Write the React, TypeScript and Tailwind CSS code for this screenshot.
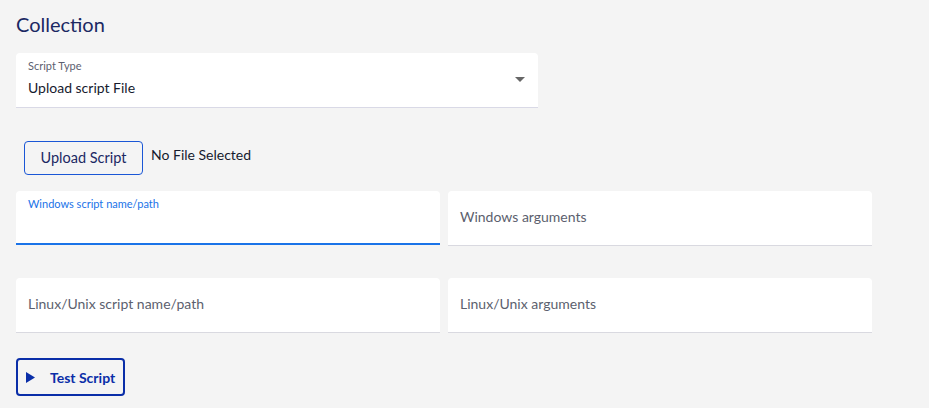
import React from "react";

const font = { fontFamily: "Lato, 'Open Sans', sans-serif" };

function Field({ label, focused }: { label: string; focused?: boolean }) {
  if (focused) {
    return (
      <div className="relative h-[54px] rounded-t-[4px] bg-white border-b-2 border-[#1a73e8]">
        <span className="absolute left-[12px] top-[5px] text-[11px] text-[#1a73e8]">{label}</span>
      </div>
    );
  }
  return (
    <div className="flex h-[55px] items-center rounded-t-[4px] bg-white border-b border-[#d9d9e0] px-[12px] pb-[4px]">
      <span className="text-[14px] text-[#5c5f6e]">{label}</span>
    </div>
  );
}

export default function App() {
  return (
    <div className="min-h-[408px] w-[929px] bg-[#f4f4f4] px-[16px] pt-[11px]" style={font}>
      <h1 className="text-[20px] leading-[26px] text-[#1b2863]">Collection</h1>

      <div className="mt-[16px] flex h-[55px] w-[522px] items-center justify-between rounded-t-[4px] border-b border-[#d9d9e6] bg-white pl-[12px] pr-[13px]">
        <div className="flex flex-col self-start pt-[6px]">
          <span className="text-[11px] leading-[14px] text-[#5c5f70]">Script Type</span>
          <span className="mt-[6px] text-[14px] leading-[18px] text-[#161a2e]">Upload script File</span>
        </div>
        <svg width="10" height="5" viewBox="0 0 10 5" className="-mt-[2px]">
          <path d="M0 0 L10 0 L5 5 Z" fill="#666" />
        </svg>
      </div>

      <div className="ml-[8px] mt-[33px] flex items-start gap-[8px]">
        <button className="h-[34px] w-[119px] rounded-[4px] border border-[#1a57d6] text-[14.5px] text-[#1b2863]">
          Upload Script
        </button>
        <span className="mt-[3px] text-[14px] text-[#161a2e]">No File Selected</span>
      </div>

      <div className="mt-[16px] grid w-[856px] grid-cols-2 gap-x-[8px] gap-y-[32px]">
        <Field label="Windows script name/path" focused />
        <Field label="Windows arguments" />
        <Field label="Linux/Unix script name/path" />
        <Field label="Linux/Unix arguments" />
      </div>

      <button className="mt-[25px] flex h-[38px] items-center rounded-[4px] border-2 border-[#0a2ea8] pl-[8px] pr-[8px] text-[14px] font-bold text-[#0a2ea8]">
        <svg width="9" height="11" viewBox="0 0 9 11" className="mr-[15px]">
          <path d="M0 0 L9 5.5 L0 11 Z" fill="#0a2ea8" />
        </svg>
        Test Script
      </button>
    </div>
  );
}
